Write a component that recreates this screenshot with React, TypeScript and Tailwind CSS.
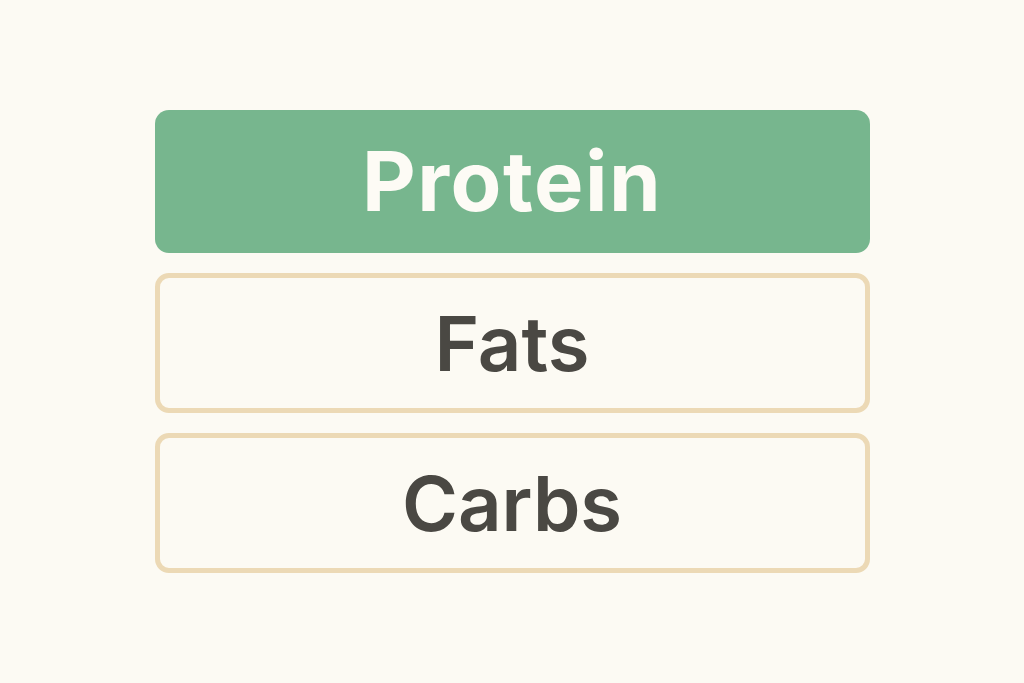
const macros = [
  { name: "Protein", active: true },
  { name: "Fats", active: false },
  { name: "Carbs", active: false },
];

export default function App() {
  return (
    <div
      className="w-full h-[683px] bg-[#fcfaf3] flex items-center justify-center"
      style={{ fontFamily: "Inter, 'Noto Sans', sans-serif" }}
    >
      <ul className="w-[715px] flex flex-col gap-[20px]">
        {macros.map((m) =>
          m.active ? (
            <li
              key={m.name}
              className="h-[143px] rounded-[14px] bg-[#77b68e] flex items-center justify-center text-[83px] font-bold text-[#fdfbf5] tracking-[1.5px]"
            >
              {m.name}
            </li>
          ) : (
            <li
              key={m.name}
              className="h-[140px] rounded-[14px] border-[5px] border-[#ecd9b5] flex items-center justify-center text-[76px] font-semibold text-[#4a4843]"
            >
              {m.name}
            </li>
          )
        )}
      </ul>
    </div>
  );
}
